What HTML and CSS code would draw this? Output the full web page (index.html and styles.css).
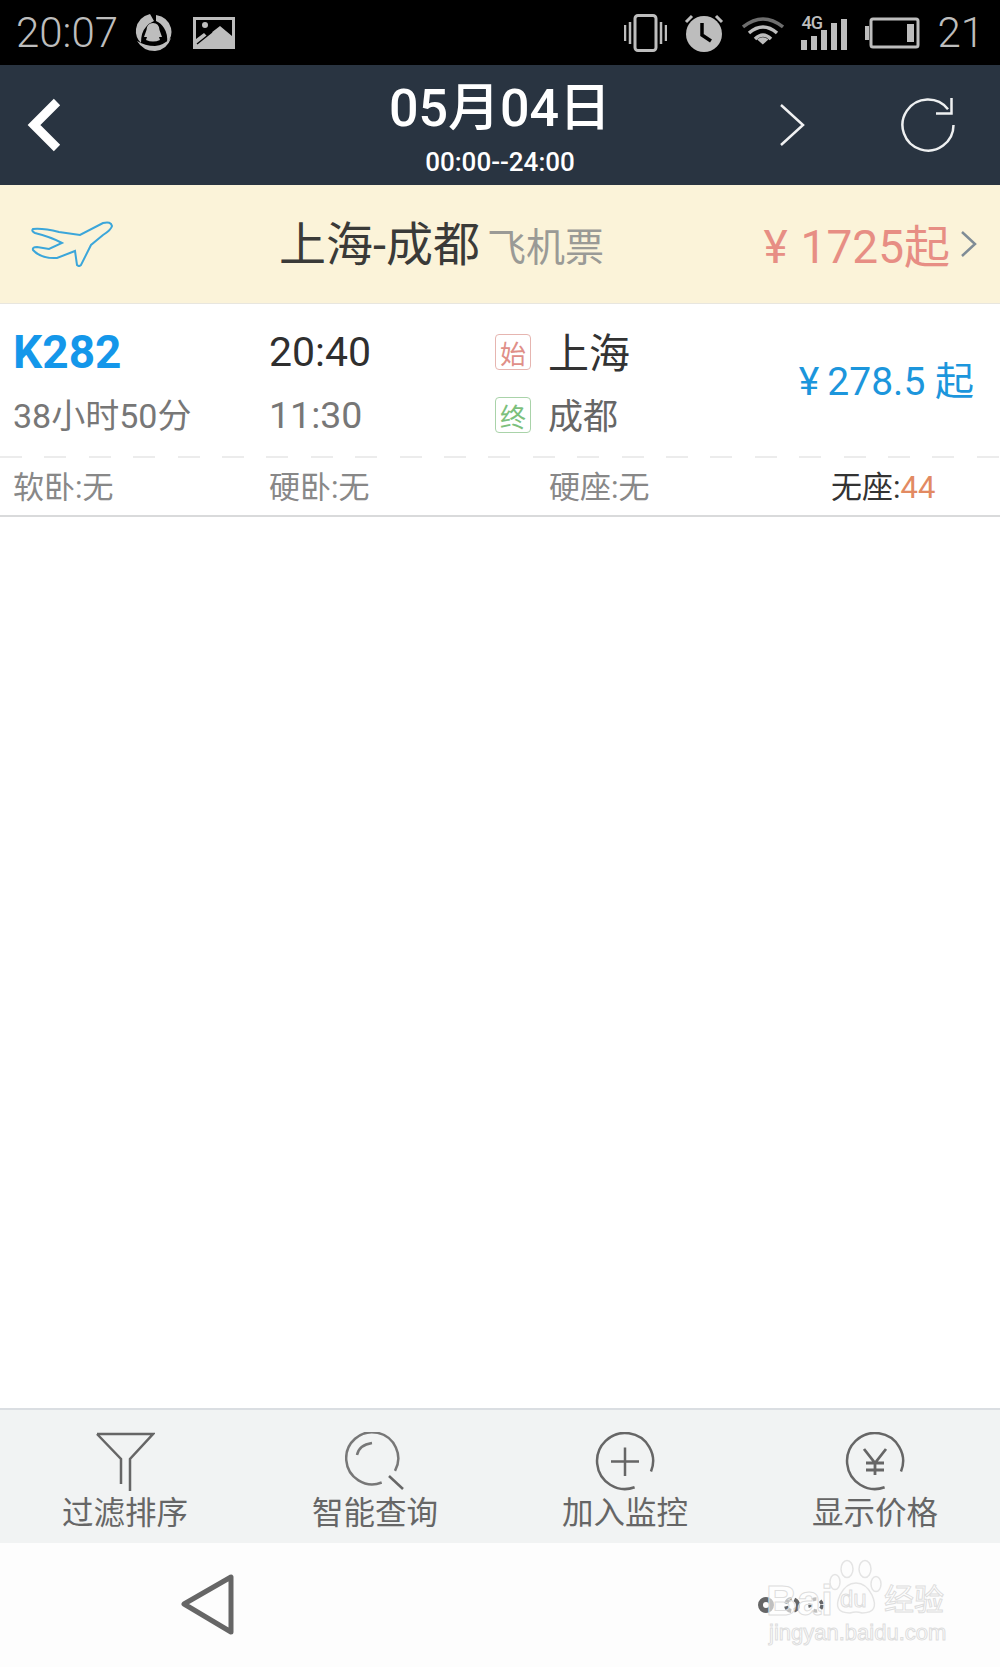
FILE: index.html
```html
<!DOCTYPE html>
<html>
<head>
<meta charset="utf-8">
<title>K282</title>
<link rel="stylesheet" href="styles.css">
</head>
<body>

<div class="page">

    <div class="status-bar">
        <span class="status-time">20:07</span>
        <svg class="ic-qq" width="38" height="38" viewBox="0 0 38 38">
            <path d="M15 0Q3 3 1 15Q0 23 6 29Q6 18 11 13Q14 9 19 7Z" fill="#bdbdbd"/>
            <path d="M21 1Q33 3 36 14Q38 22 32 29Q33 20 29 14Q26 9 21 7Z" fill="#bdbdbd"/>
            <path d="M2 27Q10 32 20 32Q29 31 36 24Q32 36 20 37Q8 37 2 27Z" fill="#bdbdbd"/>
            <path d="M18 9Q24 9 24.500 16L27 23L24 23L25 26Q18 29 11 26L12 23L9 23L11.500 16Q12 9 18 9Z" fill="#bdbdbd"/>
        </svg>
        <svg class="ic-image" width="42" height="34" viewBox="0 0 42 34">
            <path fill-rule="evenodd" d="M0 1H42V33H0ZM3 4V23L11 17L14 20L27 10L39 20V4Z" fill="#bdbdbd"/>
            <circle cx="12" cy="9" r="3" fill="#bdbdbd"/>
            <path d="M4 28L19 16" stroke="#000" stroke-width="1.500"/>
        </svg>
        <div class="status-right">
            <svg width="43" height="38" viewBox="0 0 43 38">
                <rect x="11" y="1.500" width="21" height="35" rx="3" fill="none" stroke="#bdbdbd" stroke-width="3"/>
                <path d="M1 11V27M6 8V30M37 8V30M42 11V27" stroke="#bdbdbd" stroke-width="2.500"/>
            </svg>
            <svg class="ic-clock" width="40" height="38" viewBox="0 0 40 38">
                <circle cx="20" cy="20" r="18" fill="#bdbdbd"/>
                <path d="M18 9V21L27 27" fill="none" stroke="#000" stroke-width="3.500"/>
                <path d="M2 8L8 2M38 8L32 2" stroke="#bdbdbd" stroke-width="3"/>
            </svg>
            <svg class="ic-wifi" width="42" height="34" viewBox="0 0 42 34">
                <path d="M1 11Q21 -5 41 11" fill="none" stroke="#6e6e6e" stroke-width="3.500"/>
                <path d="M7 17Q21 5 35 17" fill="none" stroke="#bdbdbd" stroke-width="3.500"/>
                <path d="M13 23Q21 15 29 23" fill="none" stroke="#bdbdbd" stroke-width="3.500"/>
                <path d="M14 27Q21 21 28 27L21 33Z" fill="#bdbdbd" transform="translate(4 2) scale(.8)"/>
            </svg>
            <div class="signal">
                <span class="signal-label">4G</span>
                <svg width="46" height="34" viewBox="0 0 46 34">
                    <path d="M0 24H6V34H0ZM10 20H16V34H10ZM20 14H26V34H20ZM30 7H36V34H30ZM40 3H46V34H40Z" fill="#bdbdbd"/>
                </svg>
            </div>
            <svg width="55" height="32" viewBox="0 0 55 32">
                <rect x="6" y="2" width="47" height="28" rx="2" fill="none" stroke="#bdbdbd" stroke-width="3"/>
                <rect x="0" y="9" width="4" height="14" fill="#bdbdbd"/>
                <rect x="42" y="7" width="7" height="18" fill="#bdbdbd"/>
            </svg>
            <span class="status-batt">21</span>
        </div>
    </div>

    <div class="title-bar">
        <svg class="ic-back" width="36" height="54" viewBox="0 0 36 54">
            <path d="M31 4L8 27L31 50" fill="none" stroke="#fff" stroke-width="9"/>
        </svg>
        <div class="title-date">
            <div class="date-main">05月04日</div>
            <div class="date-sub">00:00--24:00</div>
        </div>
        <div class="title-tools">
            <svg width="26" height="42" viewBox="0 0 26 42">
                <path d="M2 1L24 21L2 41" fill="none" stroke="#f0f1f2" stroke-width="2.500"/>
            </svg>
            <svg width="54" height="56" viewBox="0 0 54 56">
                <path d="M47 12.200A25.500 25.500 0 1 0 52.500 28" fill="none" stroke="#eef0f1" stroke-width="2.500"/>
                <path d="M50.500 1V16.500H35" fill="none" stroke="#eef0f1" stroke-width="2.500"/>
            </svg>
        </div>
    </div>

    <div class="flight-band">
        <svg class="ic-plane" width="82" height="46" viewBox="0 0 82 46">
            <path d="M2 8Q12 7 28 11L49 14L72 2Q80 0 81 5Q80 9 72 14L60 24L50 44Q48 46 46 44L44 30L26 37Q10 38 2 29Q1 26 6 26L18 28L31 22Q20 16 4 12Q0 10 2 8Z" fill="none" stroke="#3ba6da" stroke-width="2"/>
        </svg>
        <div class="flight-title">
            <span class="flight-route">上海-成都</span>
            <span class="flight-kind">飞机票</span>
        </div>
        <div class="flight-price">
            <span><span class="flight-yen">¥</span>1725起</span>
            <svg width="16" height="26" viewBox="0 0 16 26">
                <path d="M1 1L14 13L1 25" fill="none" stroke="#7f8c96" stroke-width="2.500"/>
            </svg>
        </div>
    </div>

    <div class="train-row">
        <div class="train-no">K282</div>
        <div class="time-start">20:40</div>
        <div class="station">
            <span class="badge badge-start">始</span>
            <span class="city-start">上海</span>
        </div>
        <div class="train-price"><span class="train-yen">¥</span>278.5 起</div>
        <div class="train-long">38小时50分</div>
        <div class="time-end">11:30</div>
        <div class="station">
            <span class="badge badge-end">终</span>
            <span class="city-end">成都</span>
        </div>
    </div>
    <div class="dash"></div>
    <div class="seat-row">
        <div>软卧:无</div>
        <div>硬卧:无</div>
        <div class="seat-hard">硬座:无</div>
        <div class="seat-none">无座:<span class="seat-num">44</span></div>
    </div>

    <div class="spacer"></div>

    <div class="tool-bar">
        <div class="tool">
            <svg width="60" height="60" viewBox="0 0 60 60">
                <path d="M2 2H58L35 27V59M2 2L26 27V52" fill="none" stroke="#666" stroke-width="2.500"/>
            </svg>
            <span>过滤排序</span>
        </div>
        <div class="tool">
            <svg width="60" height="60" viewBox="0 0 60 60">
                <path d="M50 38.800A26 26 0 1 0 36.700 50.500" fill="none" stroke="#777" stroke-width="2.500"/>
                <path d="M44 44L58 57" stroke="#666" stroke-width="2.500"/>
                <path d="M12 23Q14 13 27 11" fill="none" stroke="#777" stroke-width="2.500"/>
            </svg>
            <span>智能查询</span>
        </div>
        <div class="tool">
            <svg width="60" height="60" viewBox="0 0 60 60">
                <path d="M56 39.500A28 28 0 1 0 39.600 55.300" fill="none" stroke="#666" stroke-width="2.500"/>
                <path d="M16 29.500H44M30 15.500V44" stroke="#666" stroke-width="2.500"/>
            </svg>
            <span>加入监控</span>
        </div>
        <div class="tool">
            <svg width="60" height="60" viewBox="0 0 60 60">
                <path d="M56 39.500A28 28 0 1 0 39.600 55.300" fill="none" stroke="#666" stroke-width="2.500"/>
                <path d="M19 17L30 31L41 17M21 31H39M21 38H39M30 31V43" fill="none" stroke="#666" stroke-width="2.800"/>
            </svg>
            <span>显示价格</span>
        </div>
    </div>

    <div class="nav-bar">
        <svg class="ic-nav-back" width="54" height="62" viewBox="0 0 54 62">
            <path d="M3 30L50 3V58Z" fill="none" stroke="#666" stroke-width="5" stroke-linejoin="round"/>
        </svg>
        <svg class="ic-nav-menu" width="70" height="20" viewBox="0 0 70 20">
            <circle cx="9" cy="10" r="5.500" fill="none" stroke="#666" stroke-width="5"/>
            <circle cx="35" cy="10" r="6" fill="none" stroke="#666" stroke-width="4" stroke-dasharray="7 3"/>
            <circle cx="59" cy="10" r="6" fill="none" stroke="#666" stroke-width="3.500" stroke-dasharray="4 4"/>
        </svg>
        <div class="watermark">
            <div class="wm-top">
                <span class="wm-bai">Bai</span>
                <div class="wm-paw">
                    <svg width="56" height="58" viewBox="0 0 56 58">
                        <g fill="none" stroke="#e4e4e4" stroke-width="1.500">
                            <ellipse cx="7" cy="23" rx="5" ry="7.500"/>
                            <ellipse cx="19" cy="10" rx="6" ry="8.500"/>
                            <ellipse cx="37" cy="10" rx="6" ry="8.500"/>
                            <ellipse cx="48" cy="25" rx="5" ry="7.500"/>
                            <path d="M28 24Q38 24 44 36Q52 54 34 54Q28 52 22 54Q4 54 12 36Q18 24 28 24Z"/>
                        </g>
                    </svg>
                    <span class="wm-du">du</span>
                </div>
                <span class="wm-jy">经验</span>
            </div>
            <div class="wm-url">jingyan.baidu.com</div>
        </div>
    </div>

</div>

</body>
</html>
```
FILE: styles.css
```css
* {
    box-sizing: border-box;
}

body {
    margin: 0;
    background: #fff;
    font-family: Roboto, "Noto Sans CJK SC", sans-serif;
}

svg {
    display: block;
    flex: none;
}

.page {
    display: flex;
    flex-direction: column;
    height: 1667px;
    overflow: hidden;
}

/* status bar */
.status-bar {
    display: flex;
    align-items: center;
    height: 65px;
    padding: 0 16px 0 16px;
    background: #000;
    color: #bdbdbd;
}

.status-time,
.status-batt {
    font-size: 42px;
    font-weight: 300;
    line-height: 65px;
}

.ic-qq {
    margin-left: 17px;
}

.ic-image {
    margin-left: 20px;
}

.status-right {
    display: flex;
    align-items: center;
    gap: 17.500px;
    margin-left: auto;
}

.signal {
    position: relative;
}

.signal-label {
    position: absolute;
    left: 0;
    top: -2px;
    font-size: 18px;
    font-weight: 500;
    line-height: 18px;
    letter-spacing: -1px;
}

/* title bar */
.title-bar {
    display: grid;
    grid-template-columns: 1fr auto 1fr;
    align-items: center;
    height: 120px;
    background: #293441;
    color: #fff;
}

.ic-back {
    margin-left: 26px;
}

.title-date {
    padding-top: 8px;
    text-align: center;
}

.date-main {
    font-size: 52px;
    font-weight: 500;
    line-height: 60px;
}

.date-sub {
    margin-top: 5px;
    font-size: 26px;
    font-weight: 500;
    line-height: 36px;
}

.title-tools {
    display: flex;
    align-items: center;
    justify-content: flex-end;
    gap: 96px;
    padding-right: 45px;
}

/* flight band */
.flight-band {
    display: flex;
    align-items: center;
    height: 119px;
    padding: 0 23px 0 31px;
    background: #fbf3d9;
    border-bottom: 1px solid #e8e6df;
}

.flight-title {
    display: flex;
    align-items: baseline;
    gap: 7px;
    margin-left: 166px;
    margin-bottom: 8px;
}

.flight-route {
    font-size: 47px;
    color: #3a3a38;
}

.flight-kind {
    font-size: 39px;
    color: #9a9a96;
}

.flight-price {
    display: flex;
    align-items: center;
    gap: 11px;
    margin-left: auto;
    font-size: 46px;
    color: #e78e84;
}

.flight-price span {
    margin-bottom: 3px;
}

.flight-yen {
    margin-right: 13px;
}

/* train row */
.train-row {
    display: grid;
    grid-template-columns: 256px 226px 1fr auto;
    grid-template-rows: 64px 62px;
    align-items: center;
    padding: 16px 26px 0 13px;
    height: 152px;
}

.train-no {
    font-size: 46px;
    font-weight: 700;
    color: #1497ea;
}

.time-start {
    font-size: 41px;
    color: #2f2f2f;
}

.train-long {
    margin-top: -4px;
    font-size: 34px;
    color: #777;
}

.time-end {
    font-size: 37.500px;
    color: #777;
}

.station {
    display: flex;
    align-items: center;
}

.badge {
    display: flex;
    align-items: center;
    justify-content: center;
    width: 36px;
    height: 36px;
    margin-right: 17px;
    border: 1px solid;
    border-radius: 4px;
    font-size: 26px;
}

.badge-start {
    border-color: #e6b5b0;
    color: #e08f88;
}

.badge-end {
    border-color: #a9d3a9;
    color: #7cc07c;
}

.city-start {
    margin-top: -4px;
    font-size: 41px;
    color: #333;
}

.city-end {
    margin-top: -4px;
    font-size: 35px;
    color: #666;
}

.train-price {
    grid-column: 4;
    grid-row: 1 / 3;
    margin-top: -10px;
    font-size: 39px;
    color: #1c96dc;
}

.train-yen {
    margin-right: 8px;
}

.dash {
    height: 2px;
    background: repeating-linear-gradient(90deg, #ececec 0 22px, transparent 22px 44.400px);
}

.seat-row {
    display: grid;
    grid-template-columns: 256px 280px 282px 1fr;
    align-items: center;
    height: 59px;
    padding: 0 0 4px 13px;
    border-bottom: 2px solid #d9dadb;
    font-size: 31px;
    color: #888;
}

.seat-none {
    color: #333;
}

.seat-num {
    color: #e28a62;
}

.spacer {
    flex: 1;
}

/* bottom tools */
.tool-bar {
    display: grid;
    grid-template-columns: repeat(4, 250px);
    height: 135px;
    padding-top: 22px;
    background: #f1f3f3;
    border-top: 2px solid #dadee2;
}

.tool {
    display: flex;
    flex-direction: column;
    align-items: center;
    font-size: 31.500px;
    line-height: 44px;
    color: #666;
}

/* phone nav */
.nav-bar {
    position: relative;
    flex: none;
    height: 124px;
    background: #fdfdfd;
}

.ic-nav-back {
    position: absolute;
    left: 181px;
    top: 31px;
}

.ic-nav-menu {
    position: absolute;
    left: 757px;
    top: 52px;
}

.watermark {
    position: absolute;
    left: 766px;
    top: 16px;
    color: rgba(255, 255, 255, .6);
    -webkit-text-stroke: 1px #dedede;
}

.wm-top {
    display: flex;
    align-items: flex-end;
}

.wm-bai {
    width: 62px;
    font-size: 43px;
    font-weight: 700;
    line-height: 34px;
    font-family: "Liberation Sans", sans-serif;
}

.wm-paw {
    position: relative;
    width: 56px;
}

.wm-du {
    position: absolute;
    left: 12px;
    top: 27px;
    font-size: 24px;
    line-height: 26px;
    font-family: "Liberation Sans", sans-serif;
}

.wm-jy {
    font-size: 30px;
    line-height: 34px;
}

.wm-url {
    margin-top: 4px;
    padding-left: 3px;
    font-size: 22px;
    line-height: 24px;
    white-space: nowrap;
    font-family: "Liberation Sans", sans-serif;
}
```
